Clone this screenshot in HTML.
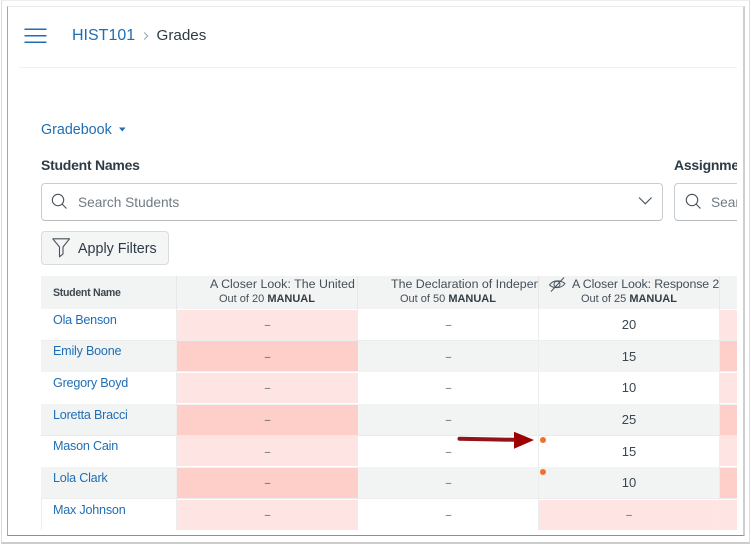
<!DOCTYPE html>
<html><head><meta charset="utf-8">
<style>
html,body{margin:0;padding:0;background:#fff}
body{width:751px;height:545px;position:relative;overflow:hidden;font-family:"Liberation Sans",sans-serif;color:#2d3b45}
.a{position:absolute;white-space:nowrap}
.name{position:absolute;left:53px;font-size:12.6px;line-height:16px;color:#1f6eb5;letter-spacing:-.22px;white-space:nowrap}
.row{position:absolute;left:41px;width:696px}
.c{position:absolute;text-align:center;font-size:13px;line-height:16px;color:#3a4650}
.d{position:absolute;text-align:center;font-size:10px;line-height:16px;color:#46525b;margin-top:1px}
.hd{position:absolute;top:276px;height:33px;overflow:hidden;background:#f2f4f4;border-right:1px solid #e6e8e8;box-sizing:border-box}
.t1{position:absolute;top:1px;font-size:12.4px;line-height:15px;color:#444f58;white-space:nowrap;letter-spacing:0}
.t2{position:absolute;top:17px;left:0;width:100%;text-align:center;font-size:11px;line-height:13px;color:#444f58;white-space:nowrap}
.t2 b{color:#333e47}
.v{position:absolute;width:1px;background:#eceeee}
</style></head><body>
<!-- outer frame -->
<div class="a" style="left:1px;top:0;width:747px;height:541px;border:1px solid #dcdcdc;border-top-color:#eeeeee;border-bottom:2px solid #cccccc"></div>
<div class="a" style="left:7px;top:6px;width:735px;height:528px;border:1px solid #a8a8a8;border-top-color:#ececec;border-right:2px solid #cfcfcf;border-bottom:1.5px solid #8f8f8f;background:#fff"></div>

<!-- header -->
<svg class="a" style="left:24px;top:28px" width="24" height="16"><path d="M0.500 1.200H22.500M0.500 7.700H22.500M0.500 14.300H22.500" stroke="#1f6eb5" stroke-width="1.500" fill="none"/></svg>
<div class="a" style="left:72px;top:26px;font-size:16px;line-height:19px;color:#1f6eb5">HIST101</div>
<svg class="a" style="left:143px;top:31px" width="7" height="10"><path d="M1.200 1.500L4.700 5L1.200 8.500" stroke="#9aa4ab" stroke-width="1" fill="none"/></svg>
<div class="a" style="left:156.500px;top:26px;font-size:15.200px;line-height:19px;color:#2d3b45">Grades</div>
<div class="a" style="left:19px;top:67px;width:718px;height:1px;background:#eef0f1"></div>

<!-- gradebook -->
<div class="a" style="left:41px;top:121px;font-size:14.300px;line-height:18px;color:#1f6eb5">Gradebook</div>
<svg class="a" style="left:119px;top:127px" width="7" height="5"><path d="M0 0.500H6.500L3.250 4.500Z" fill="#1f6eb5"/></svg>
<div class="a" style="left:41px;top:156px;font-size:14px;line-height:18px;font-weight:bold;color:#2d3b45;letter-spacing:-.25px">Student Names</div>
<div class="a" style="left:674px;top:156px;width:63px;overflow:hidden;font-size:14px;line-height:18px;font-weight:bold;color:#2d3b45;letter-spacing:-.25px">Assignment</div>

<div class="a" style="left:41px;top:183px;width:620px;height:35.500px;border:1px solid #c7cdd1;border-bottom-color:#b4babe;border-radius:4px;background:#fff"></div>
<svg class="a" style="left:51px;top:193px" width="17" height="17"><circle cx="7" cy="7" r="5.700" stroke="#46525b" stroke-width="1.100" fill="none"/><path d="M11 11L15.500 15.500" stroke="#46525b" stroke-width="1.100"/></svg>
<div class="a" style="left:78px;top:194px;font-size:13.700px;line-height:18px;color:#6f7b84">Search Students</div>
<svg class="a" style="left:638px;top:196px" width="15" height="10"><path d="M1 1.500L7.300 7.800L13.600 1.500" stroke="#46525b" stroke-width="1.100" fill="none"/></svg>

<div class="a" style="left:674px;top:183px;width:63px;height:38px;overflow:hidden">
  <div class="a" style="left:0;top:0;width:100px;height:35.500px;border:1px solid #c7cdd1;border-bottom-color:#b4babe;border-radius:4px;background:#fff"></div>
  <svg class="a" style="left:11px;top:10px" width="17" height="17"><circle cx="7" cy="7" r="5.700" stroke="#46525b" stroke-width="1.100" fill="none"/><path d="M11 11L15.500 15.500" stroke="#46525b" stroke-width="1.100"/></svg>
  <div class="a" style="left:37px;top:11px;font-size:13.700px;line-height:18px;color:#6f7b84">Search</div>
</div>

<div class="a" style="left:41px;top:231px;width:126px;height:32px;background:#f4f5f5;border:1px solid #d8dcde;border-radius:4px"></div>
<svg class="a" style="left:52px;top:238px" width="19" height="20"><path d="M0.800 0.800H17.500L11 9V16L7.500 18.800V9Z" stroke="#46525b" stroke-width="1.100" fill="none" stroke-linejoin="round"/></svg>
<div class="a" style="left:78px;top:240px;font-size:14.300px;line-height:18px;color:#2d3b45">Apply Filters</div>

<!-- table header -->
<div class="hd" style="left:41px;width:136px"><div class="a" style="left:12px;top:10.500px;font-size:10.600px;line-height:13px;font-weight:bold;color:#3d4850;letter-spacing:-.3px">Student Name</div></div>
<div class="hd" style="left:177px;width:181px"><div class="t1" style="left:33px;letter-spacing:.02px">A Closer Look: The United</div><div class="t2" style="left:0">Out of 20 <b>MANUAL</b></div></div>
<div class="hd" style="left:358px;width:181px"><div class="t1" style="left:33px;width:147px;overflow:hidden">The Declaration of Independence</div><div class="t2" style="left:0">Out of 50 <b>MANUAL</b></div></div>
<div class="hd" style="left:539px;width:181px"><div class="t1" style="left:33px;letter-spacing:-.12px">A Closer Look: Response 2</div><div class="t2" style="left:0">Out of 25 <b>MANUAL</b></div>
<svg class="a" style="left:9px;top:0" width="20" height="17"><path d="M1.500 9C5 4 12 3.500 17 7.500C13.500 12.500 6 13 1.500 9Z" stroke="#46525b" stroke-width="1" fill="none"/><circle cx="9" cy="8.300" r="3" stroke="#46525b" stroke-width="1" fill="none"/><path d="M3 15.500L16 1.500" stroke="#46525b" stroke-width="1"/></svg></div>
<div class="hd" style="left:720px;width:17px;border-right:0"></div>

<!-- row backgrounds -->
<div class="row" style="top:309px;height:31px;background:#fff;border-bottom:1px solid #eceeee"></div>
<div class="row" style="top:341px;height:31px;background:#f2f4f4"></div>
<div class="row" style="top:372px;height:32px;background:#fff"></div>
<div class="row" style="top:404px;height:31px;background:#f2f4f4;border-bottom:1px solid #eaecec"></div>
<div class="row" style="top:436px;height:31px;background:#fff"></div>
<div class="row" style="top:467px;height:32px;background:#f2f4f4;box-sizing:border-box;border-bottom:1px solid #eceeee"></div>
<div class="row" style="top:499px;height:31px;background:#fff"></div>

<!-- pink col 1 -->
<div class="a" style="left:177px;top:310px;width:181px;height:30px;background:#fee5e3"></div>
<div class="a" style="left:177px;top:341px;width:181px;height:30px;background:#fecfc8"></div>
<div class="a" style="left:177px;top:373px;width:181px;height:30px;background:#fee5e3"></div>
<div class="a" style="left:177px;top:405px;width:181px;height:30px;background:#fecfc8"></div>
<div class="a" style="left:177px;top:436px;width:181px;height:30px;background:#fee5e3"></div>
<div class="a" style="left:177px;top:468px;width:181px;height:30px;background:#fecfc8"></div>
<div class="a" style="left:177px;top:500px;width:181px;height:30px;background:#fee5e3"></div>
<!-- pink last col -->
<div class="a" style="left:720px;top:310px;width:17px;height:30px;background:#fee5e3"></div>
<div class="a" style="left:720px;top:341px;width:17px;height:30px;background:#fecfc8"></div>
<div class="a" style="left:720px;top:373px;width:17px;height:30px;background:#fee5e3"></div>
<div class="a" style="left:720px;top:405px;width:17px;height:30px;background:#fecfc8"></div>
<div class="a" style="left:720px;top:436px;width:17px;height:30px;background:#fee5e3"></div>
<div class="a" style="left:720px;top:468px;width:17px;height:30px;background:#fecfc8"></div>
<div class="a" style="left:720px;top:500px;width:17px;height:30px;background:#fee5e3"></div>
<div class="a" style="left:539px;top:500px;width:180px;height:30px;background:#fee5e3"></div>

<!-- vertical lines -->
<div class="v" style="left:176px;top:309px;height:221px"></div>
<div class="v" style="left:538px;top:309px;height:221px"></div>
<div class="v" style="left:719px;top:309px;height:221px"></div>
<div class="v" style="left:41px;top:499px;height:31px"></div>

<!-- names -->
<div class="name" style="top:311.500px">Ola Benson</div>
<div class="name" style="top:343px">Emily Boone</div>
<div class="name" style="top:375px">Gregory Boyd</div>
<div class="name" style="top:406.500px">Loretta Bracci</div>
<div class="name" style="top:438px">Mason Cain</div>
<div class="name" style="top:470px">Lola Clark</div>
<div class="name" style="top:501.500px">Max Johnson</div>

<!-- dashes col 1 -->
<div class="d" style="left:177px;width:181px;top:317px">–</div>
<div class="d" style="left:177px;width:181px;top:349px">–</div>
<div class="d" style="left:177px;width:181px;top:380px">–</div>
<div class="d" style="left:177px;width:181px;top:412px">–</div>
<div class="d" style="left:177px;width:181px;top:444px">–</div>
<div class="d" style="left:177px;width:181px;top:475px">–</div>
<div class="d" style="left:177px;width:181px;top:507px">–</div>
<!-- dashes col 2 -->
<div class="d" style="left:358px;width:181px;top:317px">–</div>
<div class="d" style="left:358px;width:181px;top:349px">–</div>
<div class="d" style="left:358px;width:181px;top:380px">–</div>
<div class="d" style="left:358px;width:181px;top:412px">–</div>
<div class="d" style="left:358px;width:181px;top:444px">–</div>
<div class="d" style="left:358px;width:181px;top:475px">–</div>
<div class="d" style="left:358px;width:181px;top:507px">–</div>
<!-- col 3 -->
<div class="c" style="left:539px;width:180px;top:317px">20</div>
<div class="c" style="left:539px;width:180px;top:349px">15</div>
<div class="c" style="left:539px;width:180px;top:380px">10</div>
<div class="c" style="left:539px;width:180px;top:412px">25</div>
<div class="c" style="left:539px;width:180px;top:444px">15</div>
<div class="c" style="left:539px;width:180px;top:475px">10</div>
<div class="d" style="left:539px;width:180px;top:507px">–</div>

<!-- dots + arrow -->
<div class="a" style="left:540px;top:437px;width:6px;height:6px;border-radius:50%;background:#f0702c"></div>
<div class="a" style="left:540px;top:469px;width:6px;height:6px;border-radius:50%;background:#f0702c"></div>
<svg class="a" style="left:456px;top:430px" width="80" height="20"><path d="M3.500 8.700L58 9.800" stroke="#94121a" stroke-width="4" stroke-linecap="round" fill="none"/><path d="M58 1.800L78 10L58 18.800Z" fill="#9c0000"/></svg>
</body></html>
